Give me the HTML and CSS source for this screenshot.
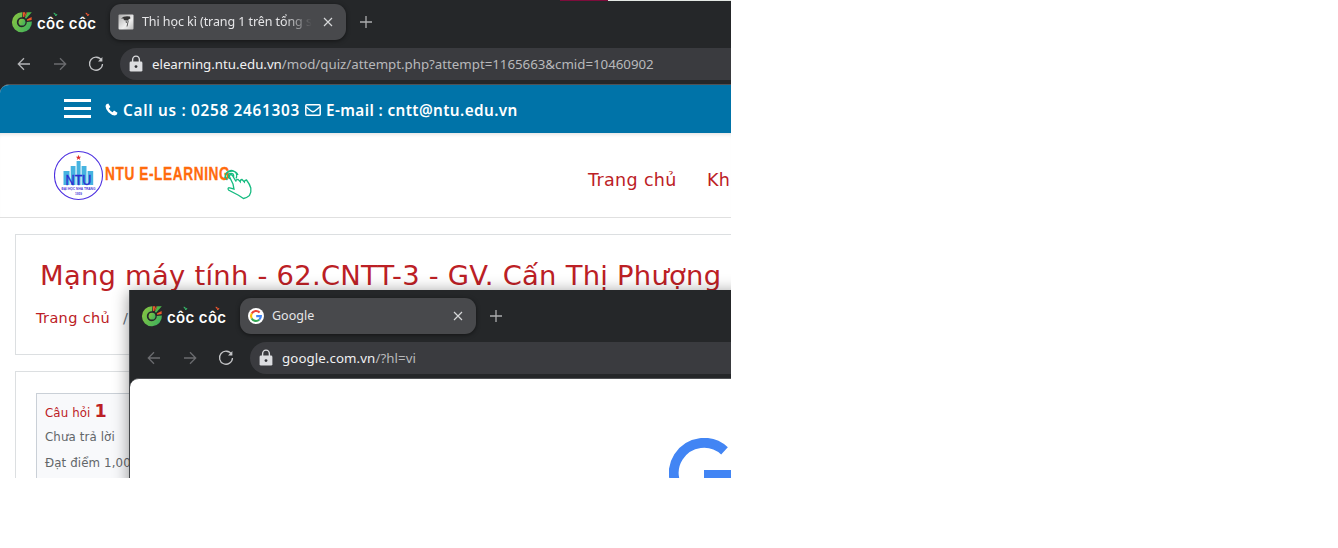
FILE: index.html
```html
<!DOCTYPE html>
<html lang="vi">
<head>
<meta charset="utf-8">
<title>NTU E-Learning</title>
<link rel="stylesheet" href="styles.css">
</head>
<body>
<svg width="0" height="0" class="defs">
  <defs>
    <linearGradient id="leaf" x1="0" y1="0" x2="1" y2="0.5"><stop offset="0" stop-color="#8cc63f"/><stop offset="1" stop-color="#45b35a"/></linearGradient>
    <symbol id="coccoc" viewBox="0 0 22 22">
      <path d="M11.4 1.3A10 10 0 1 0 20.9 10.6L15.8 10.9A5 5 0 1 1 11.2 6.2Z" fill="url(#leaf)"/>
      <circle cx="11" cy="11.2" r="3.4" fill="url(#leaf)"/>
      <path d="M11.8 1.2L14.2 1.2L13.1 6.2L12 5.8Z" fill="#f0592b"/>
      <path d="M16.2 1.2H20.8L15 7.8L13.9 6.8Z" fill="#4cb748"/>
      <path d="M16 1.5L14 5.8L13.5 5.4L14.9 1.5Z" fill="#f0592b"/>
      <path d="M20.6 6V8.9L16.1 9.8L15.9 8.6Z" fill="#f0592b"/>
    </symbol>
    <symbol id="sprout" viewBox="0 0 6 6"><path d="M.4 1.2C2.6 .6 3 1.8 3.3 3.2C4 2.3 4.7 2.4 5.2 2.8C5 4.4 4 5 2.5 4.9C2.9 3.2 1.6 3.3 .4 1.2Z" fill="currentColor"/></symbol>
    <symbol id="back" viewBox="0 0 14 14"><path d="M13 7H1.5M7 1.3L1.3 7L7 12.7" fill="none" stroke="currentColor" stroke-width="1.3"/></symbol>
    <symbol id="forward" viewBox="0 0 14 14"><path d="M1 7H12.5M7 1.3L12.7 7L7 12.7" fill="none" stroke="currentColor" stroke-width="1.3"/></symbol>
    <symbol id="reload" viewBox="0 0 16 16"><path d="M13.6 4.4A6.5 6.5 0 1 0 14.5 8" fill="none" stroke="currentColor" stroke-width="1.3"/><path d="M14.4 1V5.4H10Z" fill="currentColor"/></symbol>
    <symbol id="lock" viewBox="0 0 14 18"><path d="M3.6 8V5A3.4 3.9 0 0 1 10.4 5V8" fill="none" stroke="#dcdde0" stroke-width="1.4"/><rect x=".6" y="6.6" width="12.8" height="10" rx="1.4" fill="#dcdde0"/><circle cx="7" cy="11.6" r="1.4" fill="#303135"/></symbol>
    <symbol id="close" viewBox="0 0 10 10"><path d="M1 1L9 9M9 1L1 9" stroke="#d6d7d9" stroke-width="1.2"/></symbol>
    <symbol id="plus" viewBox="0 0 12 12"><path d="M6 0V12M0 6H12" stroke="#acadae" stroke-width="1.3"/></symbol>
  </defs>
</svg>

<main class="screen">
  <section class="window">
    <header class="chrome chrome-main">
      <div class="tabs">
        <div class="brand"><svg class="brand-mark"><use href="#coccoc"/></svg><span class="brand-name">côc côc</span><svg class="sprout green"><use href="#sprout"/></svg><svg class="sprout red"><use href="#sprout"/></svg></div>
        <div class="tab">
          <svg class="favicon" viewBox="0 0 16 16"><defs><linearGradient id="fav" x1="0" y1="0" x2="1" y2="1"><stop offset="0" stop-color="#aaa"/><stop offset=".6" stop-color="#eee"/><stop offset="1" stop-color="#bbb"/></linearGradient></defs><rect x=".5" y=".5" width="15" height="15" rx="1" fill="url(#fav)"/><path d="M3 4.4Q6 1.6 12 2.6L12.4 4.4L10.6 5.2L10.2 7L8.6 6L6 6.2L5.4 4.6Z" fill="#333"/><path d="M8 6L8.4 9M10.2 7L9 12.5" fill="none" stroke="#555"/></svg>
          <span class="tab-title long">Thi học kì (trang 1 trên tổng s</span>
          <svg class="close"><use href="#close"/></svg>
        </div>
        <svg class="plus"><use href="#plus"/></svg>
      </div>
      <div class="toolbar">
        <svg class="arrow lit"><use href="#back"/></svg><svg class="arrow"><use href="#forward"/></svg><svg class="reload"><use href="#reload"/></svg>
        <div class="address"><svg class="lock"><use href="#lock"/></svg><span class="url url-quiz"><b>elearning.ntu.edu.vn</b>/mod/quiz/attempt.php?attempt=1165663&amp;cmid=10460902</span></div>
      </div>
    </header>
    <div class="page">
      <div class="contact">
        <span class="menu"><i></i><i></i><i></i></span>
        <svg class="phone" viewBox="0 0 13 13"><path d="M3.3 .5L5.4 4L3.8 5.4Q5 7.8 7.6 9.2L9 7.6L12.5 9.8Q12.2 12.4 9.8 12.5Q6.5 12.2 3.5 9.3Q.5 6 .5 3Q.8 .8 3.3 .5Z" fill="#fff"/></svg>
        <span class="call">Call us : 0258 2461303</span>
        <svg class="mail" viewBox="0 0 16 12"><rect x=".8" y=".8" width="14.4" height="10.4" rx="1" fill="none" stroke="#fff" stroke-width="1.5"/><path d="M1 2.8L6.5 7.2Q8 8.2 9.5 7.2L15 2.8" fill="none" stroke="#fff" stroke-width="1.4"/></svg>
        <span class="email">E-mail : cntt@ntu.edu.vn</span>
      </div>
      <nav class="site-nav">
        <svg class="logo" viewBox="0 0 200 52">
          <circle cx="24.5" cy="25.5" r="24" fill="#fff" stroke="#4c2fe0" stroke-width="1.1"/>
          <path d="M24.5 4.8L25.2 6.8H27.2L25.6 8L26.2 10L24.5 8.8L22.8 10L23.4 8L21.8 6.8H23.8Z" fill="#e02c2c"/>
          <path d="M9.5 21H15.5V35H9.5ZM16.7 16H21.5V35H16.7ZM22.6 11H26.6V35H22.6ZM27.6 16H32.5V35H27.6ZM33.6 21H39.2V35H33.6Z" fill="#45b3e0"/>
          <text x="11.5" y="34.5" class="logo-ntu" textLength="26" lengthAdjust="spacingAndGlyphs">NTU</text>
          <text x="7.5" y="40.4" class="logo-small" textLength="34" lengthAdjust="spacingAndGlyphs">ĐẠI HỌC NHA TRANG</text>
          <text x="21" y="45" class="logo-small" textLength="7" lengthAdjust="spacingAndGlyphs">1959</text>
          <text transform="translate(51 30.3) scale(.76 1)" class="logo-word" textLength="164">NTU E-LEARNING</text>
          <g fill="none" stroke="#16bb80" stroke-width="1.3"><circle cx="177" cy="26" r="2.7"/><path d="M173.4 30A5.5 5.5 0 1 1 182 28.5M170.8 28A7 7 0 0 1 184 25"/><path fill="#fff" d="M179 34L175.4 26.5Q175.2 24.6 177 24.5L178.4 25.5L182 31.5Q181.7 29.4 184 29.4L186.2 31.7Q186 29.7 188 29.5L190.4 32Q190.6 29.9 192.5 30Q195.7 34 196.8 38Q197.5 42 195.5 45.4Q192.5 47.8 189.5 48.5L184.5 45.2L174.5 40Q173.5 38.4 174.8 37.7L180 39Z"/></g>
        </svg>
        <a class="nav-home">Trang chủ</a><a class="nav-courses">Kh</a>
      </nav>
      <section class="card course">
        <h1>Mạng máy tính - 62.CNTT-3 - GV. Cấn Thị Phượng</h1>
        <p class="crumbs"><a>Trang chủ</a><span>/</span></p>
      </section>
      <section class="card quiz">
        <div class="question"><p class="q-number">Câu hỏi <strong>1</strong></p><p>Chưa trả lời</p><p class="grade">Đạt điểm 1,00</p></div>
      </section>
    </div>
  </section>
  <div class="top-edge"></div>

  <section class="window overlay">
    <header class="chrome">
      <div class="tabs">
        <div class="brand"><svg class="brand-mark"><use href="#coccoc"/></svg><span class="brand-name">côc côc</span><svg class="sprout green"><use href="#sprout"/></svg><svg class="sprout red"><use href="#sprout"/></svg></div>
        <div class="tab">
          <svg class="favicon" viewBox="0 0 16 16"><circle cx="8" cy="8" r="8" fill="#fff"/><g fill="none" stroke-width="2.1"><path d="M11.6 4.5A4.9 4.9 0 0 0 3.7 5.6" stroke="#ea4335"/><path d="M3.7 5.6A4.9 4.9 0 0 0 3.7 10.4" stroke="#fbbc05"/><path d="M3.7 10.4A4.9 4.9 0 0 0 11.2 11.8" stroke="#34a853"/><path d="M11.2 11.8A4.9 4.9 0 0 0 12.9 8.1H8.2" stroke="#4285f4"/></g></svg>
          <span class="tab-title google">Google</span>
          <svg class="close"><use href="#close"/></svg>
        </div>
        <svg class="plus"><use href="#plus"/></svg>
      </div>
      <div class="toolbar">
        <svg class="arrow"><use href="#back"/></svg><svg class="arrow"><use href="#forward"/></svg><svg class="reload"><use href="#reload"/></svg>
        <div class="address"><svg class="lock"><use href="#lock"/></svg><span class="url url-google"><b>google.com.vn</b>/?hl=vi</span></div>
      </div>
    </header>
    <div class="page search-page">
      <svg class="big-g" viewBox="0 0 62 70"><path d="M55.5 12.8A30.2 30.2 0 1 0 64.6 41" fill="none" stroke="#4285f4" stroke-width="9.8"/><path d="M35 32H66V42H35Z" fill="#4285f4"/></svg>
    </div>
  </section>
</main>
</body>
</html>
```
FILE: styles.css
```css
* { box-sizing: border-box; }
body { margin: 0; background: #fff; }
svg { display: block; flex: none; }
p, h1 { margin: 0; font-weight: 400; }
.defs { position: absolute; }

.screen { position: relative; width: 731px; height: 478px; overflow: hidden; }
.window { width: 731px; background: #252729; }
.overlay { position: absolute; left: 129px; top: 290px; height: 200px; border-left: 1px solid #44474a; box-shadow: 0 2px 15px rgba(0, 0, 0, .42); }
.top-edge { position: absolute; left: 560px; top: 0; width: 171px; height: 1px; background: linear-gradient(90deg, #7d0c3b 48px, #e4e8e4 48px); }

/* Browser frame */
.chrome { padding-top: 8px; height: 88px; background: #252729; font-family: "Noto Sans", sans-serif; }
.chrome-main { padding-top: 4px; height: 84px; }
.tabs { display: flex; align-items: center; height: 36px; }
.brand { position: relative; display: flex; width: 110px; height: 36px; padding: 7px 0 0 11px; }
.brand-mark { width: 22px; height: 22px; }
.brand-name { margin: 2px 0 0 4px; color: #fff; font: 600 15px/22px Inter, Lato, sans-serif; letter-spacing: .35px; white-space: nowrap; }
.sprout { position: absolute; top: 8px; width: 5px; height: 5px; }
.green { left: 53px; color: #35b568; }
.red { left: 85px; color: #e9552f; }
.tab { display: flex; align-items: center; width: 236px; height: 36px; padding: 0 13px 0 8px; border-radius: 11px; background: #48494c; box-shadow: 0 1px 4px rgba(0, 0, 0, .5); }
.favicon { width: 16px; height: 16px; }
.tab-title { margin: 0 auto 1px 8px; color: #e5e5e7; font-size: 12.5px; line-height: 18px; white-space: nowrap; }
.long { width: 172px; margin-right: 0; letter-spacing: -.08px; -webkit-mask-image: linear-gradient(90deg, #000 142px, transparent 170px); mask-image: linear-gradient(90deg, #000 142px, transparent 170px); }
.close { width: 10px; height: 10px; margin-left: auto; }
.plus { width: 12px; height: 12px; margin-left: 14px; }
.toolbar { display: flex; align-items: center; height: 32px; margin-top: 8px; padding-left: 17px; }
.arrow { width: 14px; height: 14px; margin-right: 22px; color: #6b6c6f; }
.lit { color: #b3b4b6; }
.reload { width: 16px; height: 16px; margin-left: -1px; color: #c3c4c6; }
.address { display: flex; align-items: center; width: 700px; flex: none; height: 32px; margin-left: 16px; padding-left: 9px; border-radius: 16px 0 0 16px; background: #3a3b3f; }
.lock { width: 14px; height: 18px; }
.url { margin-left: 9px; color: #b8b9bb; font-size: 13.3px; line-height: 20px; white-space: nowrap; }
.url-quiz { letter-spacing: -.02px; }
.url-google { letter-spacing: .08px; }
.url b { color: #f0f0f1; font-weight: 400; }

/* Course site */
.page { height: 394px; border-top: 1px solid #505255; border-radius: 9px 0 0 0; overflow: hidden; background: #fff; font-family: "DejaVu Sans", sans-serif; }
.contact { display: flex; align-items: center; height: 48px; padding: 1px 0 0 64px; background: #0073a8; color: #fff; font: 600 15.3px/20px "Noto Sans", sans-serif; white-space: nowrap; }
.menu { display: grid; gap: 5px; width: 27px; margin-top: -3px; }
.menu i { height: 3px; background: #fff; }
.phone { width: 13px; height: 13px; margin-left: 14px; }
.call { width: 179px; margin-left: 5px; letter-spacing: .72px; }
.mail { width: 16px; height: 12px; margin-left: 3px; }
.email { margin-left: 5px; letter-spacing: .4px; }
.site-nav { display: flex; height: 85px; padding: 17px 0 0 54px; border-bottom: 1px solid #e0e0e0; box-shadow: inset 0 4px 4px -3px #ddd; color: #bc2025; font-size: 17.5px; line-height: 24px; letter-spacing: .35px; white-space: nowrap; }
.logo { width: 200px; height: 52px; letter-spacing: 0; }
.logo-ntu { font: 14px "Liberation Sans", sans-serif; fill: #2c2bd0; stroke: #2c2bd0; stroke-width: .3; }
.logo-small { font: 700 4px "Liberation Sans", sans-serif; fill: #4b38d8; }
.logo-word { font: 700 18px "Liberation Sans", sans-serif; fill: #ff6b0d; stroke: #ff6b0d; stroke-width: .3; }
.nav-home { width: 89px; margin: 18px 0 0 334px; }
.nav-courses { margin: 18px 0 0 30px; }
.card { margin-left: 15px; width: 760px; border: 1px solid #dcdfe1; }
.course { height: 121px; margin-top: 16px; padding: 22px 0 0 24px; color: #bc2025; }
h1 { font-size: 27.4px; line-height: 38px; letter-spacing: .25px; white-space: nowrap; }
.crumbs { display: flex; margin: 13px 0 0 -4px; font-size: 14.5px; line-height: 20px; letter-spacing: .35px; }
.crumbs span { margin-left: 13px; color: #65717b; }
.quiz { height: 180px; margin-top: 16px; padding: 21px 0 0 20px; }
.question { width: 160px; height: 150px; padding: 7px 0 0 8px; border: 1px solid #cad0d7; background: #f8f9fb; color: #626669; font-size: 11.8px; line-height: 24px; letter-spacing: .12px; white-space: nowrap; }
.q-number { color: #bc2025; }
.q-number strong { font-size: 17.5px; line-height: 20px; }
.grade { margin-top: 2px; }
.search-page { padding: 59px 0 0 539px; }
.big-g { width: 62px; height: 70px; }
```
